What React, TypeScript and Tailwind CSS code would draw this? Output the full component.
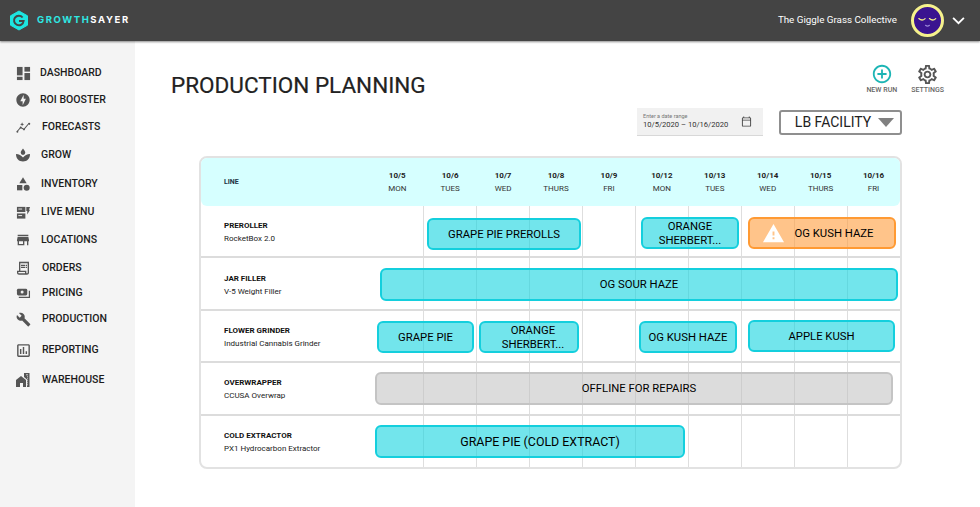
import React from "react";
import { MdOutlineAssessment, MdBuild, MdStore, MdOutlineReceiptLong, MdCategory, MdOfflineBolt, MdOutlineSettings, MdAddCircleOutline, MdOutlineCalendarToday, MdWarning } from "react-icons/md";

function DashIcon() {
  return <svg viewBox="0 0 16 16" className="w-[15px] h-[15px]" fill="#555"><rect x="1" y="1" width="6" height="9"/><rect x="9" y="1" width="6" height="5"/><rect x="9" y="7.500" width="6" height="7.500"/><rect x="1" y="11.500" width="6" height="3.500"/></svg>;
}
function ForecastIcon() {
  return <svg viewBox="0 0 16 16" className="w-[15px] h-[15px]" fill="#555" stroke="none"><path d="M1 12.500 L5 8 L8.500 10 L13 4.500" fill="none" stroke="#555" strokeWidth="1.100"/><path d="M6.500 2.500l.6 1.500 1.500.6-1.500.6-.6 1.500-.6-1.500-1.500-.6 1.500-.6z"/><circle cx="14" cy="4" r="1.200"/><circle cx="5" cy="8" r="1"/><circle cx="8.500" cy="10" r="1"/><circle cx="1.500" cy="12.500" r="1"/></svg>;
}
function GrowIcon() {
  return <svg viewBox="0 0 16 16" className="w-[16px] h-[16px]" fill="#555"><path d="M8 1.500c1.300 1.600 2.300 2.800 2.300 4.100a2.300 2.300 0 0 1-4.600 0C5.700 4.300 6.700 3.100 8 1.500z"/><path d="M1 7c2.700.2 5.600 1.600 7 3.500C9.400 8.600 12.300 7.200 15 7c0 4.800-3 7.500-7 7.500S1 11.800 1 7z"/></svg>;
}
function LiveIcon() {
  return <svg viewBox="0 0 16 16" className="w-[15px] h-[15px]" fill="#555"><rect x="1" y="2" width="9" height="5.500" /><rect x="1" y="9" width="9" height="5.500" /><path d="M11 2h4l-1.200 3H15l-3 5V6.500h-1z" /><rect x="2.500" y="3.800" width="4" height="1" fill="#eee"/><rect x="2.500" y="10.800" width="4" height="1" fill="#eee"/></svg>;
}
function PricingIcon() {
  return <svg viewBox="0 0 16 16" className="w-[15px] h-[15px]" fill="none"><rect x="1" y="3" width="11" height="7" rx="1.500" fill="#555"/><circle cx="6.500" cy="6.500" r="1.600" fill="#eee"/><path d="M3 12.200H14.300V5" stroke="#555" strokeWidth="1.300"/></svg>;
}
function WarehouseIcon() {
  return <svg viewBox="0 0 16 16" className="w-[16px] h-[16px]" fill="#555"><path d="M1 15V8l5-4 5 4v7H8v-4H5v4z"/><path d="M9 1h5.500v14H12V7.500L9 5z"/><path d="M11 2.800h2M12 4.800h1M12 6.800h1M12 8.800h1M12 10.800h1M12 12.800h1" stroke="#eee" strokeWidth=".8"/></svg>;
}
function Logo() {
  return <svg viewBox="0 0 20 21" className="w-[20px] h-[21px]"><path d="M10 1 L18.500 5.800 V15.200 L10 20 L1.500 15.200 V5.800 Z" fill="#1de5e0" stroke="#1de5e0" strokeLinejoin="round"/><path d="M13.600 7.500 A4.800 4.800 0 1 0 14.600 11 H10" fill="none" stroke="#444" strokeWidth="2"/></svg>;
}
function Avatar() {
  return <div className="w-[33px] h-[33px] rounded-full bg-[#3a1490] border-[3px] border-[#f6f28c] flex items-center justify-center">
    <svg viewBox="0 0 28 28" className="w-[27px] h-[27px]" fill="none" stroke="#f6f28c" strokeWidth="1.300" strokeLinecap="round"><path d="M5 12q3.500 3 6.500 0"/><path d="M16 12q3.500 3 6.500 0"/><path d="M12 19q2 1.500 4 0" stroke="#9a88d8"/></svg>
  </div>;
}

const ic = "text-[#555]";
const nav: [string, React.ReactNode, number, number][] = [
  ["DASHBOARD", <DashIcon />, 66, 40],
  ["ROI BOOSTER", <MdOfflineBolt className={`text-[16px] ${ic}`} />, 93, 40],
  ["FORECASTS", <ForecastIcon />, 120, 42],
  ["GROW", <GrowIcon />, 148, 41],
  ["INVENTORY", <MdCategory className={`text-[16px] ${ic}`} />, 177, 41],
  ["LIVE MENU", <LiveIcon />, 205, 41],
  ["LOCATIONS", <MdStore className={`text-[16px] ${ic}`} />, 233, 41],
  ["ORDERS", <MdOutlineReceiptLong className={`text-[16px] ${ic}`} />, 261, 42],
  ["PRICING", <PricingIcon />, 286, 42],
  ["PRODUCTION", <MdBuild className={`text-[15px] ${ic}`} />, 312, 42],
  ["REPORTING", <MdOutlineAssessment className={`text-[17px] ${ic}`} />, 343, 42],
  ["WAREHOUSE", <WarehouseIcon />, 373, 42],
];

const days = [["10/5","MON"],["10/6","TUES"],["10/7","WED"],["10/8","THURS"],["10/9","FRI"],["10/12","MON"],["10/13","TUES"],["10/14","WED"],["10/15","THURS"],["10/16","FRI"]];

type Bar = { t: React.ReactNode; x: number; w: number; y: number; h?: number; kind?: "o" | "g"; warn?: boolean; pad?: string; big?: boolean };

const rows: { name: string; sub: string; h: string; lab: string; bars: Bar[] }[] = [
  { name: "PREROLLER", sub: "RocketBox 2.0", h: "h-[52px]", lab: "mt-[2px]", bars: [
    { t: "GRAPE PIE PREROLLS", x: 427, w: 154, y: 12 },
    { t: <>ORANGE<br/>SHERBERT...</>, x: 641, w: 98, y: 11 },
    { t: "OG KUSH HAZE", x: 748, w: 148, y: 11, kind: "o", warn: true, pad: "pr-[9px]" },
  ]},
  { name: "JAR FILLER", sub: "V-5 Weight Filler", h: "h-[53px]", lab: "mt-[2px]", bars: [
    { t: "OG SOUR HAZE", x: 380, w: 518, y: 10, h: 33 },
  ]},
  { name: "FLOWER GRINDER", sub: "Industrial Cannabis Grinder", h: "h-[52px]", lab: "mt-[2px]", bars: [
    { t: "GRAPE PIE", x: 377, w: 97, y: 10 },
    { t: <>ORANGE<br/>SHERBERT...</>, x: 479, w: 100, y: 10, pad: "pl-[8px]" },
    { t: "OG KUSH HAZE", x: 639, w: 98, y: 10 },
    { t: "APPLE KUSH", x: 748, w: 147, y: 9 },
  ]},
  { name: "OVERWRAPPER", sub: "CCUSA Overwrap", h: "h-[53px]", lab: "", bars: [
    { t: "OFFLINE FOR REPAIRS", x: 375, w: 518, y: 9, h: 33, kind: "g", pad: "pl-[10px]" },
  ]},
  { name: "COLD EXTRACTOR", sub: "PX1 Hydrocarbon Extractor", h: "h-[53px]", lab: "-mt-[2px]", bars: [
    { t: "GRAPE PIE (COLD EXTRACT)", x: 375, w: 310, y: 9, h: 33, pad: "pl-[20px]", big: true },
  ]},
];

function GanttBar({ b }: { b: Bar }) {
  const tone = b.kind === "o"
    ? "bg-[#ff9c3c]/60 border-[#ff9a33]"
    : b.kind === "g"
    ? "bg-[#c0c0c0]/55 border-[#c4c4c4]"
    : "bg-[#14d3e0]/60 border-[#14cfdd]";
  return (
    <div
      className={`absolute flex items-center justify-center gap-[10px] rounded-[6px] border-2 pt-[1px] text-center leading-[13.500px] font-normal text-black ${b.big ? "text-[12.400px]" : "text-[11.300px]"} ${tone} ${b.pad ?? ""}`}
      style={{ left: b.x - 201, top: b.y, width: b.w, height: b.h ?? 32 }}
    >
      {b.warn && <MdWarning className="text-[23px] text-white" />}
      <span>{b.t}</span>
    </div>
  );
}

export default function App() {
  return (
    <div className="relative w-[980px] h-[507px] overflow-hidden bg-white text-[#222] font-['Roboto',sans-serif]">
      <header className="relative z-10 h-[41px] bg-[#444444] shadow-[0_1px_2px_rgba(0,0,0,0.45)] flex items-center pl-[9px] pr-[15px]">
        <Logo />
        <span className="ml-[8px] text-[9.500px] font-bold tracking-[1.600px] font-['Inter',sans-serif]"><span className="text-[#2fe7e2]">GROWTH</span><span className="text-white">SAYER</span></span>
        <span className="ml-auto text-white text-[9.800px]">The Giggle Grass Collective</span>
        <span className="ml-[14px]"><Avatar /></span>
        <svg viewBox="0 0 14 10" className="ml-[8px] w-[13px] h-[9px]" fill="none" stroke="#fff" strokeWidth="2"><path d="M1 2l6 6 6-6"/></svg>
      </header>
      <div className="flex h-[466px]">
        <aside className="relative w-[135px] bg-[#f4f4f4] shrink-0">
          {nav.map(([label, icon, y, x]) => (
            <div key={label} className="absolute flex items-center h-[14px] text-[10.500px] font-medium text-[#1c1c1c]" style={{ top: y - 41, left: 0 }}>
              <span className="w-[34px] flex justify-center ml-[6px] shrink-0">{icon}</span>
              <span style={{ marginLeft: x - 40 }}>{label}</span>
            </div>
          ))}
        </aside>
        <main className="relative flex-1">
          <div className="flex items-start pl-[36px] pr-[36px] pt-[27px]">
            <h1 className="text-[22.500px] leading-[34px] text-[#222] font-normal [-webkit-text-stroke:0.2px_#222]">PRODUCTION PLANNING</h1>
            <div className="ml-auto flex gap-[14px] mt-[-5px]">
              <div className="flex flex-col items-center text-[7px] leading-[9px] text-[#666] font-medium">
                <MdAddCircleOutline className="text-[22px] text-[#1db5b5]" />
                <span className="mt-[1px]">NEW RUN</span>
              </div>
              <div className="flex flex-col items-center text-[7px] leading-[9px] text-[#666] font-medium">
                <MdOutlineSettings className="text-[23px] text-[#555]" />
                <span>SETTINGS</span>
              </div>
            </div>
          </div>
          <div className="flex justify-end items-center gap-[16px] pr-[78px] mt-[5px] h-[30px]">
            <div className="w-[126px] h-[28px] bg-[#f1f1f1] border-b border-[#d8d8d8] px-[6px] flex items-center justify-between">
              <div>
                <div className="text-[5.500px] leading-[7px] text-[#777]">Enter a date range</div>
                <div className="text-[7.600px] leading-[10px] text-[#333]">10/5/2020 – 10/16/2020</div>
              </div>
              <MdOutlineCalendarToday className="text-[11px] text-[#444] mr-[5px]" />
            </div>
            <div className="w-[123px] h-[25px] rounded-[3px] border-2 border-[#8f8f8f] bg-white flex items-center justify-center gap-[7px] pt-[1px] pl-[8px] text-[14px] text-[#222]">
              LB FACILITY
              <span className="w-0 h-0 border-l-[8px] border-r-[8px] border-t-[9px] border-l-transparent border-r-transparent border-t-[#808080]" />
            </div>
          </div>
          <section className="relative ml-[64px] mt-[19px] w-[703px] h-[313px] rounded-[8px] border-2 border-[#e2e2e2] overflow-hidden">
            <div className="flex h-[48px] bg-[#d6ffff] rounded-b-[6px] relative z-10">
              <div className="w-[170px] pl-[23px] flex items-center text-[7px] font-bold text-[#234]">LINE</div>
              {days.map(([d, w]) => (
                <div key={d} className="w-[53px] flex flex-col items-center justify-center text-[8px] leading-[13px] text-[#333]">
                  <span className="font-bold text-[#222]">{d}</span>
                  <span>{w}</span>
                </div>
              ))}
            </div>
            <div className="absolute top-[44px] bottom-0 left-[169px] flex">
              {days.map(([d]) => <div key={d} className="w-[53px] first:border-l-0 border-l border-[#dedede]" />)}
            </div>
            {rows.map((r, i) => (
              <div key={r.name} className={`relative flex items-center pl-[23px] ${r.h} ${i < rows.length - 1 ? "border-b-2 border-[#dcdcdc]" : ""}`}>
                <div className={r.lab}>
                  <div className="text-[8px] leading-[13px] font-bold text-[#111]">{r.name}</div>
                  <div className="text-[8px] leading-[13px] text-[#222]">{r.sub}</div>
                </div>
                {r.bars.map((b, j) => <GanttBar key={j} b={b} />)}
              </div>
            ))}
          </section>
        </main>
      </div>
    </div>
  );
}
